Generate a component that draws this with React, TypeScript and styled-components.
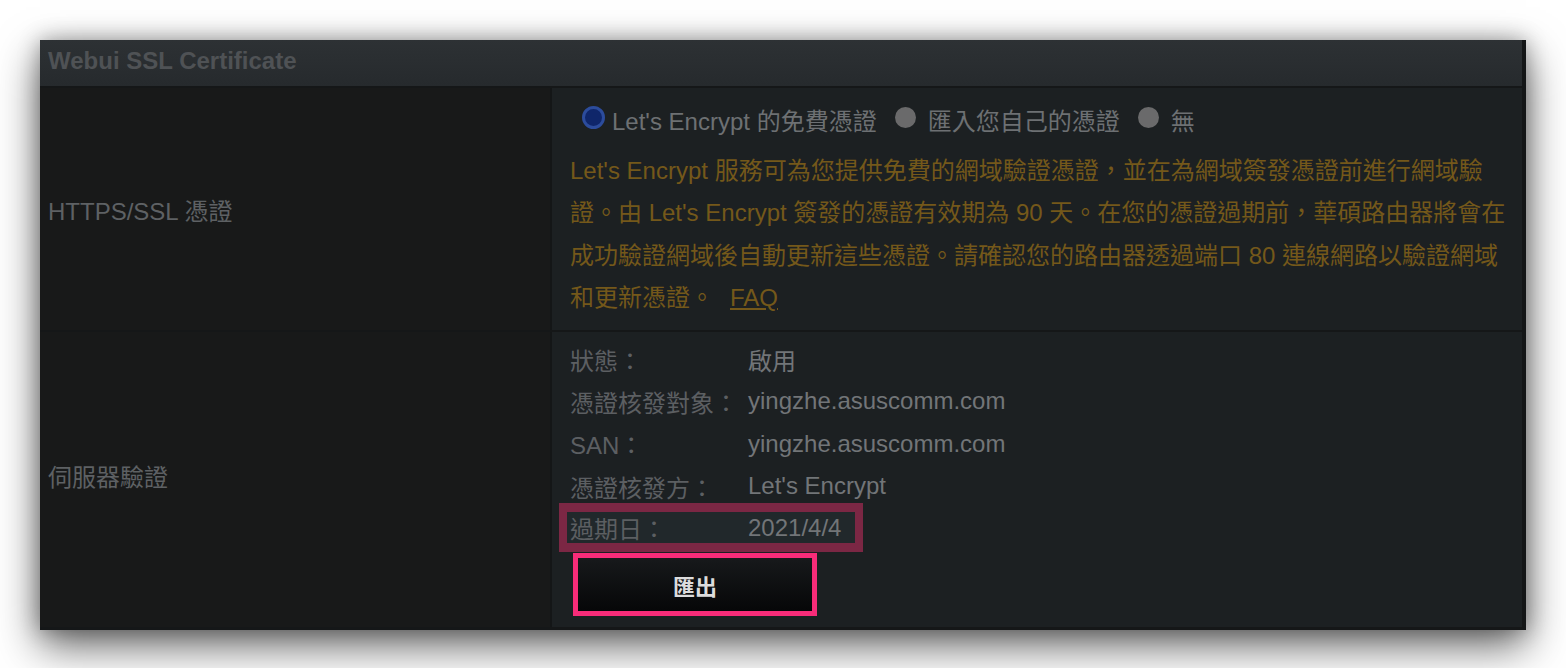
import React, { FC } from 'react';
import styled, { createGlobalStyle } from 'styled-components';

const GlobalStyle = createGlobalStyle`
  html, body {
    margin: 0;
    padding: 0;
    background: #ffffff;
  }
  body {
    font-family: "Liberation Sans", Arial, "Noto Sans CJK TC", sans-serif;
  }
`;

const Page = styled.div`
  padding: 40px 0 0 40px;
  height: 668px;
  box-sizing: border-box;
  overflow: hidden;
`;

const Panel = styled.div`
  width: 1486px;
  background: #1c2022;
  border-right: 4px solid #141617;
  border-bottom: 3px solid #151718;
  box-sizing: border-box;
  box-shadow: 0 16px 40px rgba(0, 0, 0, 0.6), 0 0 20px rgba(0, 0, 0, 0.3);
`;

const Header = styled.div`
  height: 48px;
  display: flex;
  align-items: center;
  padding: 0 0 4px 8px;
  background: linear-gradient(#2d3134, #262a2d);
  border-bottom: 2px solid #151718;
  box-sizing: border-box;
  color: #4f5255;
  font-size: 24px;
  font-weight: bold;
`;

const Row = styled.div<{ h: number; last?: boolean }>`
  display: grid;
  grid-template-columns: 510px 2px 1fr;
  height: ${({ h }) => h}px;
  border-bottom: ${({ last }) => (last ? 'none' : '2px solid #151718')};
`;

const LabelCell = styled.div<{ shift?: number }>`
  background: #181919;
  display: flex;
  align-items: center;
  padding: 0 0 ${({ shift }) => shift ?? 0}px 8px;
  color: #5e6164;
  font-size: 24px;
`;

const Divider = styled.div`
  background: #141617;
`;

const ContentCell = styled.div`
  padding: 10px 0 0 18px;
`;

const RadioRow = styled.div`
  display: flex;
  align-items: center;
  height: 42px;
  margin-left: 12px;
  margin-bottom: 10px;
  color: #6d7073;
  font-size: 24px;
`;

const Radio = styled.span<{ checked?: boolean }>`
  display: inline-block;
  box-sizing: border-box;
  width: ${({ checked }) => (checked ? 23 : 21)}px;
  height: ${({ checked }) => (checked ? 23 : 21)}px;
  border-radius: 50%;
  margin-right: ${({ checked }) => (checked ? 7 : 12)}px;
  margin-top: -4px;
  background: ${({ checked }) => (checked ? '#0f266a' : '#6a6a6b')};
  border: ${({ checked }) => (checked ? '3px solid #2c4c9c' : 'none')};
`;

const RadioLabel = styled.span`
  margin-right: 18px;
`;

const Notice = styled.p`
  margin: 0;
  color: #74581a;
  font-size: 24px;
  line-height: 42.3px;
  white-space: nowrap;
`;

const Faq = styled.a`
  color: #74581a;
  text-decoration: underline;
  margin-left: 16px;
`;

const StatusCell = styled.div`
  padding: 6px 0 0 18px;
`;

const StatusRow = styled.div`
  display: flex;
  height: 42.3px;
  align-items: center;
  font-size: 24px;
`;

const Highlight = styled.div`
  display: flex;
  align-items: center;
  width: 304px;
  height: 49px;
  box-sizing: border-box;
  margin: -4px 0 0 -11px;
  padding-left: 3px;
  border: 8px solid #7b2744;
  border-top-width: 9px;
  border-bottom-width: 9px;
  background: #21282b;
  font-size: 24px;
`;

const Key = styled.span`
  width: 178px;
  color: #5c5f62;
`;

const Value = styled.span`
  color: #727578;
`;

const ExportButton = styled.button`
  display: block;
  width: 244px;
  height: 63px;
  margin: 1px 0 0 3px;
  border: 5px solid #f82c79;
  background: linear-gradient(#17191b, #060708);
  color: #dcdcdc;
  font-family: "Liberation Sans", "Noto Sans CJK TC", sans-serif;
  font-size: 22px;
  font-weight: bold;
  cursor: pointer;
`;

const status: [string, string][] = [
  ['狀態：', '啟用'],
  ['憑證核發對象：', 'yingzhe.asuscomm.com'],
  ['SAN：', 'yingzhe.asuscomm.com'],
  ['憑證核發方：', "Let's Encrypt"],
];

const App: FC = () => {
  return (
    <Page>
      <GlobalStyle />
      <Panel>
        <Header>Webui SSL Certificate</Header>
        <Row h={242}>
          <LabelCell>HTTPS/SSL 憑證</LabelCell>
          <Divider />
          <ContentCell>
            <RadioRow>
              <Radio checked />
              <RadioLabel>Let's Encrypt 的免費憑證</RadioLabel>
              <Radio />
              <RadioLabel>匯入您自己的憑證</RadioLabel>
              <Radio />
              <RadioLabel>無</RadioLabel>
            </RadioRow>
            <Notice>
              Let's Encrypt 服務可為您提供免費的網域驗證憑證，並在為網域簽發憑證前進行網域驗
              <br />
              證。由 Let's Encrypt 簽發的憑證有效期為 90 天。在您的憑證過期前，華碩路由器將會在
              <br />
              成功驗證網域後自動更新這些憑證。請確認您的路由器透過端口 80 連線網路以驗證網域
              <br />
              和更新憑證。<Faq href="#">FAQ</Faq>
            </Notice>
          </ContentCell>
        </Row>
        <Row h={295} last>
          <LabelCell shift={8}>伺服器驗證</LabelCell>
          <Divider />
          <StatusCell>
            {status.map(([k, v]) => (
              <StatusRow key={k}>
                <Key>{k}</Key>
                <Value>{v}</Value>
              </StatusRow>
            ))}
            <Highlight>
              <Key>過期日：</Key>
              <Value>2021/4/4</Value>
            </Highlight>
            <ExportButton>匯出</ExportButton>
          </StatusCell>
        </Row>
      </Panel>
    </Page>
  );
};

export default App;
